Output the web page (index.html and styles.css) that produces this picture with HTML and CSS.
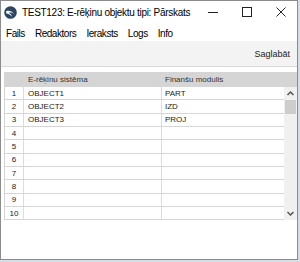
FILE: index.html
```html
<!DOCTYPE html>
<html lang="lv">
<head>
    <meta charset="UTF-8">
    <title>TEST123: E-rēķinu objektu tipi: Pārskats</title>
    <link rel="stylesheet" href="styles.css">
</head>
<body>
    <div class="window">
        <div class="titlebar">
            <svg class="app-icon" width="13" height="13" viewBox="0 0 13 13">
                <circle cx="6.5" cy="6.5" r="6.3" fill="#2d4660"/>
                <path d="M2.2 5.2 C4.5 4.2 8 5 10.2 8.2 C8.8 6.8 6.5 6.2 4.6 6.8 C6.4 7.5 7.6 9 8 11 C6.6 9 4.6 7.6 2.2 7.6 Z" fill="#fff"/>
            </svg>
            <span class="title">TEST123: E-rēķinu objektu tipi: Pārskats</span>
            <div class="controls">
                <svg width="12" height="12" viewBox="0 0 12 12"><path d="M1 6.5 H11" stroke="#222" stroke-width="1"/></svg>
                <svg width="12" height="12" viewBox="0 0 12 12"><rect x="1.5" y="1.5" width="9" height="9" fill="none" stroke="#222" stroke-width="1"/></svg>
                <svg width="12" height="12" viewBox="0 0 12 12"><path d="M1.5 1.5 L10.5 10.5 M10.5 1.5 L1.5 10.5" stroke="#222" stroke-width="1"/></svg>
            </div>
        </div>

        <div class="menubar">
            <span>Fails</span>
            <span>Redaktors</span>
            <span>Ieraksts</span>
            <span>Logs</span>
            <span>Info</span>
        </div>

        <div class="toolbar">
            <span class="tool-btn">Saglabāt</span>
        </div>

        <div class="content">
            <div class="grid">
                <div class="grid-head">
                    <div class="cell num"></div>
                    <div class="cell col1">E-rēķinu sistēma</div>
                    <div class="cell col2">Finanšu modulis</div>
                </div>
                <div class="grid-body">
                    <div class="rows">
                        <div class="row"><div class="cell num">1</div><div class="cell col1">OBJECT1</div><div class="cell col2">PART</div></div>
                        <div class="row"><div class="cell num">2</div><div class="cell col1">OBJECT2</div><div class="cell col2">IZD</div></div>
                        <div class="row"><div class="cell num">3</div><div class="cell col1">OBJECT3</div><div class="cell col2">PROJ</div></div>
                        <div class="row"><div class="cell num">4</div><div class="cell col1"></div><div class="cell col2"></div></div>
                        <div class="row"><div class="cell num">5</div><div class="cell col1"></div><div class="cell col2"></div></div>
                        <div class="row"><div class="cell num">6</div><div class="cell col1"></div><div class="cell col2"></div></div>
                        <div class="row"><div class="cell num">7</div><div class="cell col1"></div><div class="cell col2"></div></div>
                        <div class="row"><div class="cell num">8</div><div class="cell col1"></div><div class="cell col2"></div></div>
                        <div class="row"><div class="cell num">9</div><div class="cell col1"></div><div class="cell col2"></div></div>
                        <div class="row"><div class="cell num">10</div><div class="cell col1"></div><div class="cell col2"></div></div>
                    </div>
                    <div class="scrollbar">
                        <svg class="arrow" width="11" height="9" viewBox="0 0 11 9"><path d="M2.5 6 L5.5 3 L8.5 6" fill="none" stroke="#555" stroke-width="1.5"/></svg>
                        <div class="thumb"></div>
                        <div class="track"></div>
                        <svg class="arrow" width="11" height="9" viewBox="0 0 11 9"><path d="M2.5 3 L5.5 6 L8.5 3" fill="none" stroke="#555" stroke-width="1.5"/></svg>
                    </div>
                </div>
            </div>
        </div>
    </div>
    <div class="taskbar"></div>
</body>
</html>
```

FILE: styles.css
```css
body {
    margin: 0;
    width: 300px;
    height: 262px;
    overflow: hidden;
    background-color: #d6dde4;
    font-family: 'Liberation Sans', Arial, sans-serif;
    color: #000;
}

.window {
    width: 296px;
    height: 258px;
    border: 1px solid #8c8c8c;
    background-color: #fff;
    display: flex;
    flex-direction: column;
}

.titlebar {
    height: 21px;
    display: flex;
    align-items: center;
    padding-left: 3px;
}

.app-icon {
    flex: none;
    margin-right: 5px;
    margin-top: 1px;
}

.title {
    font-size: 10px;
    letter-spacing: -0.3px;
    white-space: nowrap;
    margin-top: 1px;
}

.controls {
    margin-left: auto;
    display: flex;
    gap: 22px;
    padding-right: 10px;
    margin-top: 1px;
}

.menubar {
    height: 19px;
    display: flex;
    align-items: center;
    gap: 10px;
    padding: 3px 0 0 5px;
    box-sizing: border-box;
    font-size: 10px;
    letter-spacing: -0.45px;
    white-space: nowrap;
}

.toolbar {
    height: 25px;
    background-color: #f3f3f3;
    border-bottom: 1px solid #dadada;
    display: flex;
    align-items: center;
    justify-content: flex-end;
    padding-right: 7px;
}

.tool-btn {
    font-size: 9px;
    color: #222;
    margin-top: 1px;
}

.content {
    flex: 1;
    padding: 5px 0 0 3px;
}

.grid {
    width: 292px;
    border-left: 1px solid #d4d4d4;
    font-size: 8px;
    color: #1a1a1a;
}

.grid-head {
    display: flex;
    height: 15px;
    background-color: #d5d5d5;
}

.grid-head .cell {
    border-right: none;
    color: #333;
}

.grid-body {
    display: flex;
}

.rows {
    width: 279px;
}

.row {
    display: flex;
    height: calc(40px / 3);
    box-sizing: border-box;
    border-bottom: 1px solid #d6d6d6;
}

.cell {
    display: flex;
    align-items: center;
    box-sizing: border-box;
}

.num {
    width: 19px;
    justify-content: center;
    border-right: 1px solid #dcdcdc;
}

.col1 {
    width: 138px;
    padding-left: 4px;
    border-right: 1px solid #dcdcdc;
}

.col2 {
    width: 122px;
    padding-left: 3px;
}

.scrollbar {
    width: 13px;
    background-color: #f0f0f0;
    display: flex;
    flex-direction: column;
    align-items: center;
}

.arrow {
    margin: 2px 0;
}

.thumb {
    width: 11px;
    height: 14px;
    background-color: #cdcdcd;
}

.track {
    flex: 1;
}

.taskbar {
    height: 2px;
}
```
